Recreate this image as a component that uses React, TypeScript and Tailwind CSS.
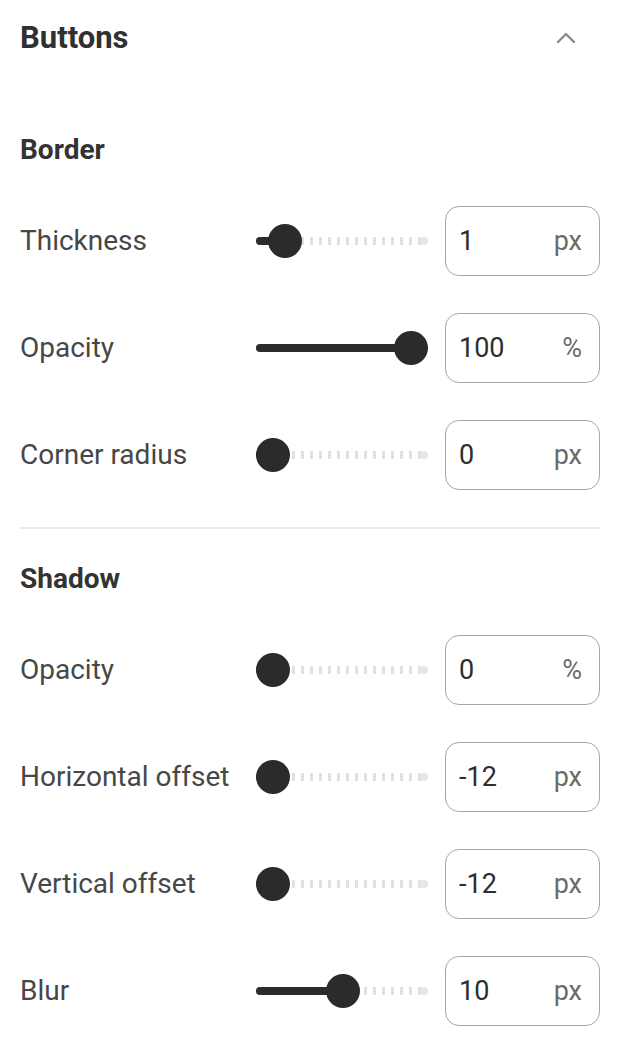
import { ChevronUp } from "lucide-react";

interface Setting {
  label: string;
  value: string;
  unit: string;
  pos: number; // thumb position 0..1
}

const BORDER: Setting[] = [
  { label: "Thickness", value: "1", unit: "px", pos: 0.09 },
  { label: "Opacity", value: "100", unit: "%", pos: 1 },
  { label: "Corner radius", value: "0", unit: "px", pos: 0 },
];

const SHADOW: Setting[] = [
  { label: "Opacity", value: "0", unit: "%", pos: 0 },
  { label: "Horizontal offset", value: "-12", unit: "px", pos: 0 },
  { label: "Vertical offset", value: "-12", unit: "px", pos: 0 },
  { label: "Blur", value: "10", unit: "px", pos: 0.51 },
];

function Slider({ pos }: { pos: number }) {
  // thumb is 34px, track is 172px wide
  const center = 17 + pos * 138;
  return (
    <div className="relative w-[172px] h-[34px]">
      <div className="absolute left-0 right-0 top-[13px] h-[8px] rounded-full bg-[repeating-linear-gradient(90deg,#e1e1e1_0_3px,transparent_3px_9px)]" />
      <div className="absolute right-0 top-[13px] h-[8px] w-[8px] rounded-full bg-[#e6e6e6]" />
      <div
        className="absolute left-0 top-[13px] h-[8px] rounded-full bg-[#2b2b2b]"
        style={{ width: center }}
      />
      <div
        className="absolute top-0 w-[34px] h-[34px] rounded-full bg-[#2b2b2b]"
        style={{ left: center - 17 }}
      />
    </div>
  );
}

function Row({ item }: { item: Setting }) {
  return (
    <div className="flex items-center h-[70px]">
      <span className="w-[236px] text-[28px] text-[#474747]">{item.label}</span>
      <Slider pos={item.pos} />
      <div className="ml-[17px] flex items-center justify-between w-[155px] h-[70px] rounded-[14px] border-[1.5px] border-[#a6a6a6] pl-[13px] pr-[17px]">
        <span className="text-[27px] text-[#2e2e2e]">{item.value}</span>
        <span className="text-[27px] text-[#6b6b6b]">{item.unit}</span>
      </div>
    </div>
  );
}

export default function App() {
  return (
    <div className="w-[618px] h-[1064px] bg-white pl-[20px] pr-[18px] font-['Roboto',sans-serif]">
      <div className="flex items-center justify-between h-[76px]">
        <h1 className="text-[31px] font-bold text-[#303030]">Buttons</h1>
        <ChevronUp className="w-[32px] h-[32px] mr-[18px] text-[#8a8a8a]" strokeWidth={1.8} />
      </div>

      <h2 className="mt-[56px] h-[36px] leading-[36px] text-[28px] font-bold text-[#333333]">Border</h2>
      <div className="mt-[38px] flex flex-col gap-[37px]">
        {BORDER.map((item) => (
          <Row key={item.label} item={item} />
        ))}
      </div>

      <div className="mt-[37px] h-[2px] bg-[#ebebeb]" />

      <h2 className="mt-[32px] h-[36px] leading-[36px] text-[28px] font-bold text-[#333333]">Shadow</h2>
      <div className="mt-[38px] flex flex-col gap-[37px]">
        {SHADOW.map((item) => (
          <Row key={item.label} item={item} />
        ))}
      </div>
    </div>
  );
}
